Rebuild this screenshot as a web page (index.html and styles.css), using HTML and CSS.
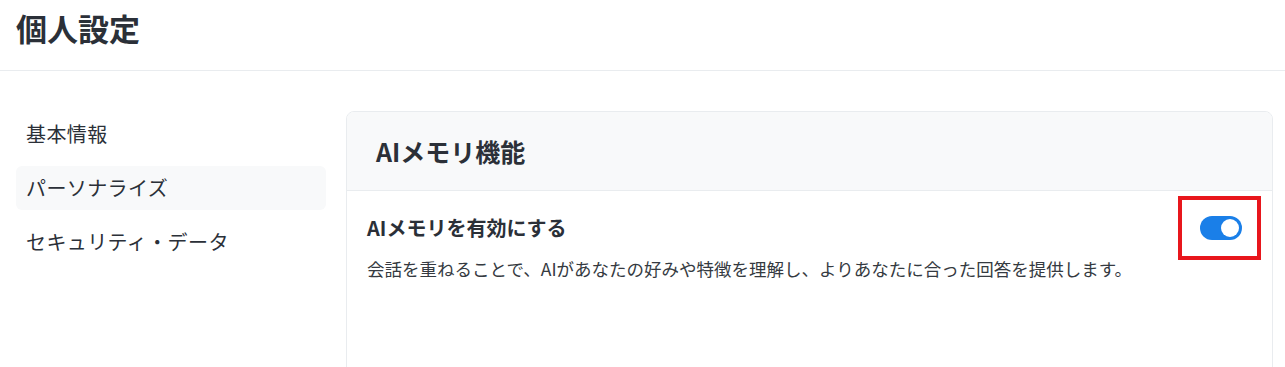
FILE: index.html
```html
<!DOCTYPE html>
<html lang="ja">
<head>
    <meta charset="UTF-8">
    <meta name="viewport" content="width=device-width, initial-scale=1.0">
    <title>個人設定</title>
    <link rel="stylesheet" href="styles.css">
</head>
<body>
    <header class="page-header">
        <h1>個人設定</h1>
    </header>

    <div class="settings-layout">
        <nav class="side-nav">
            <a class="nav-item" href="#">基本情報</a>
            <a class="nav-item active" href="#">パーソナライズ</a>
            <a class="nav-item" href="#">セキュリティ・データ</a>
        </nav>

        <section class="card">
            <div class="card-header">
                <h2>AIメモリ機能</h2>
            </div>
            <div class="card-body">
                <div class="setting-row">
                    <h3>AIメモリを有効にする</h3>
                    <label class="switch">
                        <input type="checkbox" checked>
                        <span class="slider"></span>
                        <span class="highlight"></span>
                    </label>
                </div>
                <p class="setting-desc">会話を重ねることで、AIがあなたの好みや特徴を理解し、よりあなたに合った回答を提供します。</p>
            </div>
        </section>
    </div>
</body>
</html>
```

FILE: styles.css
```css
:root {
    --text-color: #2b3038;
    --border-color: #e9ecef;
    --panel-bg: #f8f9fa;
    --primary-color: #1a7fe8;
}

* {
    box-sizing: border-box;
    margin: 0;
    padding: 0;
}

body {
    font-family: "Noto Sans CJK JP", "Noto Sans", sans-serif;
    color: var(--text-color);
    background: #ffffff;
}

.page-header {
    height: 71px;
    padding: 7px 16px 0;
    border-bottom: 1px solid var(--border-color);
}

.page-header h1 {
    font-size: 31px;
    font-weight: 700;
    line-height: 42px;
}

.settings-layout {
    display: flex;
    gap: 20px;
    padding: 40px 12px 0 16px;
}

.side-nav {
    width: 310px;
    flex-shrink: 0;
    display: flex;
    flex-direction: column;
    gap: 10px;
    padding-top: 1px;
}

.nav-item {
    display: block;
    height: 44px;
    line-height: 44px;
    padding: 0 10px;
    border-radius: 6px;
    font-size: 20px;
    letter-spacing: 0.4px;
    color: var(--text-color);
    text-decoration: none;
}

.nav-item.active {
    background: var(--panel-bg);
}

.card {
    flex: 1;
    height: 300px;
    border: 1px solid var(--border-color);
    border-radius: 8px;
    overflow: hidden;
}

.card-header {
    height: 79px;
    padding: 0 29px;
    display: flex;
    align-items: center;
    background: var(--panel-bg);
    border-bottom: 1px solid var(--border-color);
}

.card-header h2 {
    font-size: 25px;
    font-weight: 700;
}

.card-body {
    padding: 24px 20px;
}

.setting-row {
    display: flex;
    justify-content: space-between;
    align-items: center;
    padding-right: 10px;
}

.setting-row h3 {
    font-size: 20px;
    font-weight: 700;
    line-height: 26px;
}

.switch {
    position: relative;
    display: block;
    width: 42px;
    height: 24px;
    cursor: pointer;
}

.switch input {
    display: none;
}

.slider {
    position: absolute;
    inset: 0;
    background: #ced4da;
    border-radius: 12px;
}

.slider::after {
    content: "";
    position: absolute;
    top: 3px;
    left: 3px;
    width: 18px;
    height: 18px;
    background: #ffffff;
    border-radius: 50%;
}

.switch input:checked + .slider {
    background: var(--primary-color);
}

.switch input:checked + .slider::after {
    left: 21px;
}

/* annotation box round the toggle */
.highlight {
    position: absolute;
    top: -20px;
    left: -22px;
    width: 83px;
    height: 64px;
    border: 4px solid #e8161c;
}

.setting-desc {
    margin-top: 16px;
    font-size: 17.5px;
    line-height: 24px;
    color: #353a41;
}
```
